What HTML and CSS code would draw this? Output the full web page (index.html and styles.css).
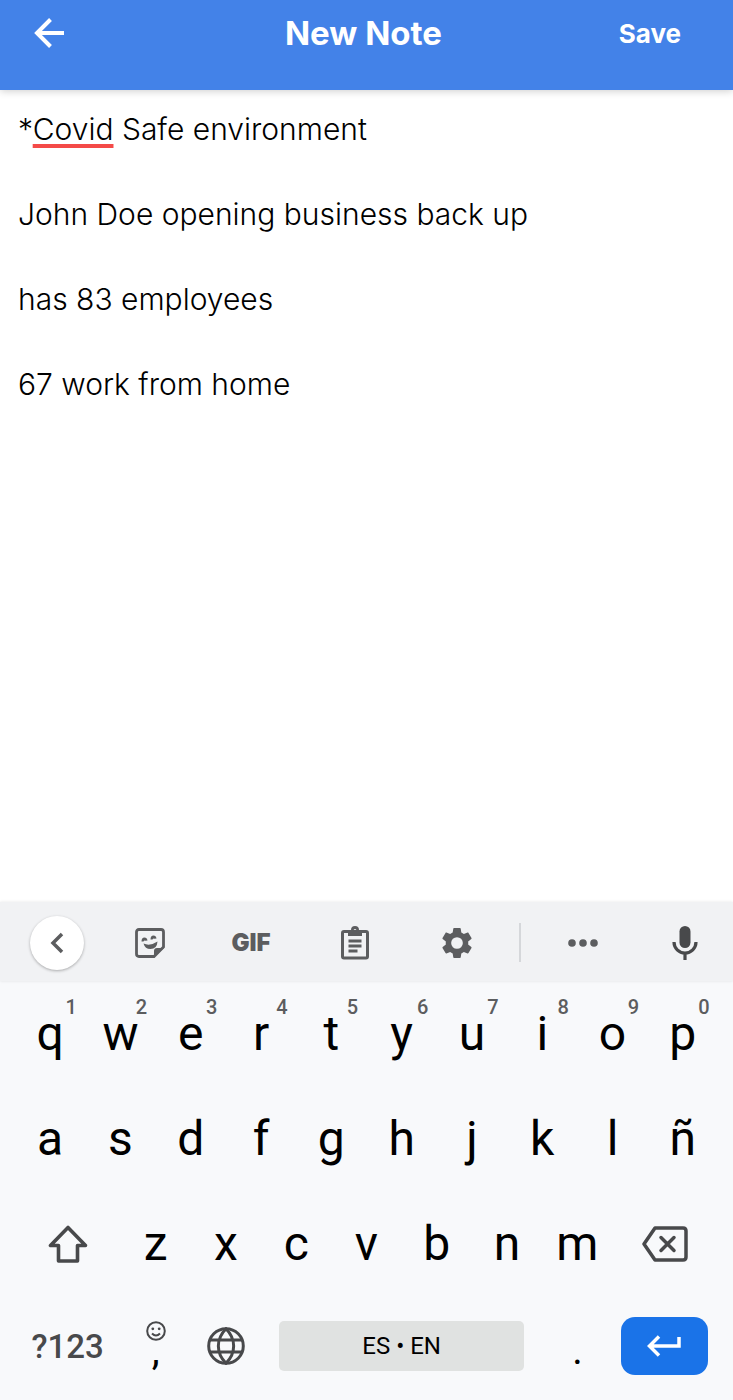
FILE: index.html
```html
<!DOCTYPE html>
<html lang="en">
<head>
<meta charset="utf-8">
<meta name="viewport" content="width=device-width, initial-scale=1">
<title>New Note</title>
<link rel="stylesheet" href="styles.css">
</head>
<body>
<header class="appbar">
  <button class="back" type="button" aria-label="Back"><svg width="32" height="32" viewBox="0 0 32 32" fill="none" stroke="currentColor" stroke-width="4"><path d="M30 16H4M16.500 2.500L3 16L16.500 29.500"/></svg></button>
  <h1 class="title">New Note</h1>
  <button class="save" type="button">Save</button>
</header>
<main class="note" role="textbox" aria-multiline="true" aria-label="Note" contenteditable="true" spellcheck="false">
  <p>*<span class="misspelled">Covid</span> Safe environment</p>
  <p>John Doe opening business back up</p>
  <p>has 83 employees</p>
  <p>67 work from home</p>
</main>
<section class="keyboard" aria-label="Keyboard">
  <div class="toolbar">
    <button class="tool collapse" type="button" aria-label="Close toolbar"><svg width="14" height="22" viewBox="0 0 14 22" fill="none" stroke="currentColor" stroke-width="3.500"><path d="M12 2L3 11L12 20"/></svg></button>
    <button class="tool" type="button" aria-label="Stickers"><svg width="30" height="30" viewBox="0 0 30 30"><path d="M4 1.500H26Q28.500 1.500 28.500 4V19L19 28.500H4Q1.500 28.500 1.500 26V4Q1.500 1.500 4 1.500Z" fill="none" stroke="currentColor" stroke-width="2.800"/><path d="M19 29V23Q19 20 22 20H29ZM8.500 15.500Q15 18.500 22.500 13.500Q22 21 15.500 21Q10 21 8.500 15.500ZM6.500 13.500Q6.500 9.500 9.500 9.500Q12 9.500 12.500 12.500L10.500 12.800Q9.500 12 8.500 13.500ZM15.500 11.500Q15.500 7.500 18.500 7.500Q21 7.500 21.500 10.500L19.500 10.800Q18.500 10 17.500 11.500Z" fill="currentColor"/></svg></button>
    <button class="tool gif" type="button">GIF</button>
    <button class="tool" type="button" aria-label="Clipboard"><svg width="30" height="34" viewBox="0 0 30 34"><rect x="2.500" y="5.500" width="25" height="26.500" rx="1.500" fill="none" stroke="currentColor" stroke-width="3"/><path fill="currentColor" fill-rule="evenodd" d="M8 4H11A4 4 0 0 1 19 4H22V10H8ZM15 3A1.500 1.500 0 1 0 15 6A1.500 1.500 0 1 0 15 3Z"/><path d="M8.500 15H21.500M8.500 20H21.500M8.500 25H17.500" stroke="currentColor" stroke-width="2.800"/></svg></button>
    <button class="tool" type="button" aria-label="Settings"><svg width="36" height="36" viewBox="0 0 24 24" fill="currentColor"><path d="M19.430 12.980c.040-.320.070-.640.070-.980s-.030-.660-.070-.980l2.110-1.650c.190-.150.240-.420.120-.640l-2-3.460c-.120-.220-.390-.300-.610-.220l-2.490 1c-.520-.400-1.080-.730-1.690-.980l-.380-2.650C14.460 2.180 14.250 2 14 2h-4c-.250 0-.460.180-.490.420l-.380 2.650c-.610.250-1.170.590-1.690.980l-2.490-1c-.230-.090-.490 0-.610.220l-2 3.460c-.130.220-.070.490.120.640l2.110 1.650c-.040.320-.070.650-.070.980s.030.660.070.980l-2.110 1.650c-.190.150-.240.420-.120.640l2 3.460c.120.220.390.300.610.220l2.490-1c.520.400 1.080.730 1.690.980l.380 2.650c.030.240.240.420.490.420h4c.250 0 .460-.180.490-.420l.380-2.650c.610-.250 1.170-.590 1.690-.980l2.490 1c.230.090.490 0 .610-.220l2-3.460c.120-.220.070-.490-.120-.640zM12 15.900a3.900 3.900 0 1 1 0-7.800 3.900 3.900 0 0 1 0 7.800z"/></svg></button>
    <span class="divider"></span>
    <button class="tool" type="button" aria-label="More"><svg width="30" height="8" viewBox="0 0 30 8" fill="currentColor"><circle cx="4" cy="4" r="3.800"/><circle cx="15" cy="4" r="3.800"/><circle cx="26" cy="4" r="3.800"/></svg></button>
    <button class="tool mic" type="button" aria-label="Voice input"><svg width="26" height="36" viewBox="0 0 26 36"><rect x="7.500" y="1" width="11" height="22" rx="5.500" fill="currentColor"/><path d="M2 17A11 11 0 0 0 24 17M13 27.500V35" fill="none" stroke="currentColor" stroke-width="3.200"/></svg></button>
  </div>
  <div class="keys">
    <button class="key" type="button">q<span class="hint">1</span></button>
    <button class="key" type="button">w<span class="hint">2</span></button>
    <button class="key" type="button">e<span class="hint">3</span></button>
    <button class="key" type="button">r<span class="hint">4</span></button>
    <button class="key" type="button">t<span class="hint">5</span></button>
    <button class="key" type="button">y<span class="hint">6</span></button>
    <button class="key" type="button">u<span class="hint">7</span></button>
    <button class="key" type="button">i<span class="hint">8</span></button>
    <button class="key" type="button">o<span class="hint">9</span></button>
    <button class="key" type="button">p<span class="hint">0</span></button>

    <button class="key" type="button">a</button>
    <button class="key" type="button">s</button>
    <button class="key" type="button">d</button>
    <button class="key" type="button">f</button>
    <button class="key" type="button">g</button>
    <button class="key" type="button">h</button>
    <button class="key" type="button">j</button>
    <button class="key" type="button">k</button>
    <button class="key" type="button">l</button>
    <button class="key" type="button">ñ</button>

    <button class="key wide" type="button" aria-label="Shift"><svg width="40" height="38" viewBox="0 0 40 38" fill="none" stroke="currentColor" stroke-width="3.600" stroke-linejoin="round"><path d="M20 2.500L2.500 20.500H10.500V36H29.500V20.500H37.500Z"/></svg></button>
    <button class="key" type="button">z</button>
    <button class="key" type="button">x</button>
    <button class="key" type="button">c</button>
    <button class="key" type="button">v</button>
    <button class="key" type="button">b</button>
    <button class="key" type="button">n</button>
    <button class="key" type="button">m</button>
    <button class="key wide" type="button" aria-label="Backspace"><svg width="46" height="36" viewBox="0 0 46 36" fill="none" stroke="currentColor" stroke-width="3.500" stroke-linejoin="round" stroke-linecap="round"><path d="M13 2H41Q44 2 44 5V31Q44 34 41 34H13L2 18Z"/><path d="M19 11.500L32 24.500M32 11.500L19 24.500"/></svg></button>

    <button class="key wide symbols" type="button">?123</button>
    <button class="key comma" type="button"><svg width="20" height="20" viewBox="0 0 20 20" fill="none" stroke="currentColor" stroke-width="2"><circle cx="10" cy="10" r="8.800"/><path d="M6 12.500Q10 16.500 14 12.500"/><g fill="currentColor" stroke="none"><circle cx="6.800" cy="7.800" r="1.400"/><circle cx="13.200" cy="7.800" r="1.400"/></g></svg><span class="mark">,</span></button>
    <button class="key icon" type="button" aria-label="Change language"><svg width="38" height="38" viewBox="0 0 38 38" fill="none" stroke="currentColor" stroke-width="3"><circle cx="19" cy="19" r="17.300"/><path d="M19 1.700C8.800 12 8.800 26 19 36.300C29.200 26 29.200 12 19 1.700ZM3 13H35M3 25H35"/></svg></button>
    <button class="key space" type="button">ES • EN</button>
    <button class="key period" type="button">.</button>
    <button class="key wide enter" type="button" aria-label="Enter"><svg width="34" height="22" viewBox="0 0 34 22" fill="none" stroke="currentColor" stroke-width="3.500"><path d="M32 2V11H3M12 1.500L2.500 11L12 20.500"/></svg></button>
  </div>
</section>
</body>
</html>
```
FILE: styles.css
```css
* {
  box-sizing: border-box;
}

body {
  display: flex;
  flex-direction: column;
  min-height: 100vh;
  margin: 0;
  background: #fff;
  color: #000;
  font-family: Inter, "Open Sans", sans-serif;
}

button {
  margin: 0;
  padding: 0;
  border: 0;
  background: none;
  color: inherit;
  font: inherit;
}

svg {
  display: block;
}

.appbar {
  display: grid;
  grid-template-columns: 1fr auto 1fr;
  align-items: center;
  padding: 10px 40px 34px 34px;
  background: #4382e8;
  color: #fff;
  box-shadow: 0 1px 8px rgba(0, 0, 0, 0.2);
}

.back {
  justify-self: start;
}

.title {
  margin: 0;
  font-size: 33px;
  line-height: 46px;
  font-weight: 700;
}

.save {
  justify-self: end;
  padding: 0 12px;
  font-size: 26px;
  font-weight: 700;
}

.note {
  flex: 1;
  display: flex;
  flex-direction: column;
  gap: 42px;
  padding: 18px;
  outline: 0;
  font-size: 30px;
  line-height: 43px;
  font-weight: 300;
}

.note p {
  margin: 0;
}

.misspelled {
  text-decoration: underline #f44a48 4px;
  text-underline-offset: 4px;
  text-decoration-skip-ink: none;
}

.keyboard {
  background: #f8f9fb;
  font-family: Roboto, sans-serif;
}

.toolbar {
  display: grid;
  grid-template-columns: 94fr 92fr 110fr 98fr 106fr 19fr 108fr 96fr;
  place-items: center;
  height: 79px;
  padding: 2px 0 0 10px;
  background: #f1f2f4;
  color: #5c5d5f;
  box-shadow: 0 0 3px rgba(0, 0, 0, 0.1);
}

.tool {
  display: grid;
  place-items: center;
  min-height: 40px;
}

.collapse {
  width: 54px;
  height: 54px;
  border-radius: 50%;
  background: #fff;
  box-shadow: 0 1px 3px rgba(0, 0, 0, 0.3);
}

.gif {
  font-family: Inter, sans-serif;
  font-size: 24px;
  font-weight: 900;
}

.divider {
  width: 2px;
  height: 39px;
  background: #d5d7da;
}

.mic {
  color: #48494b;
}

.keys {
  display: grid;
  grid-template-columns: repeat(20, 1fr);
  grid-template-rows: repeat(3, 105px) 100px;
  padding: 0 15px 4px;
}

.key {
  position: relative;
  display: flex;
  align-items: center;
  justify-content: center;
  grid-column: span 2;
  min-width: 0;
  font-size: 48px;
}

.hint {
  position: absolute;
  top: 16px;
  left: 50%;
  width: 42px;
  color: #5c5d5f;
  font-size: 20px;
  line-height: 20px;
  font-weight: 500;
}

.wide {
  grid-column: span 3;
  color: #48494b;
}

.symbols {
  font-size: 33px;
  font-weight: 500;
}

.comma {
  flex-direction: column;
  padding-bottom: 10px;
  color: #48494b;
}

.mark {
  color: #000;
  font-size: 40px;
  line-height: 20px;
}

.icon {
  color: #48494b;
}

.space {
  grid-column: span 8;
  align-self: center;
  height: 50px;
  margin: 0 18px;
  border-radius: 5px;
  background: #e0e2e1;
  font-size: 24px;
}

.period {
  padding-top: 8px;
  font-size: 40px;
}

.enter {
  align-self: center;
  height: 58px;
  margin: 0 10px 0 8px;
  border-radius: 14px;
  background: #1a73e8;
  color: #fff;
}
```
